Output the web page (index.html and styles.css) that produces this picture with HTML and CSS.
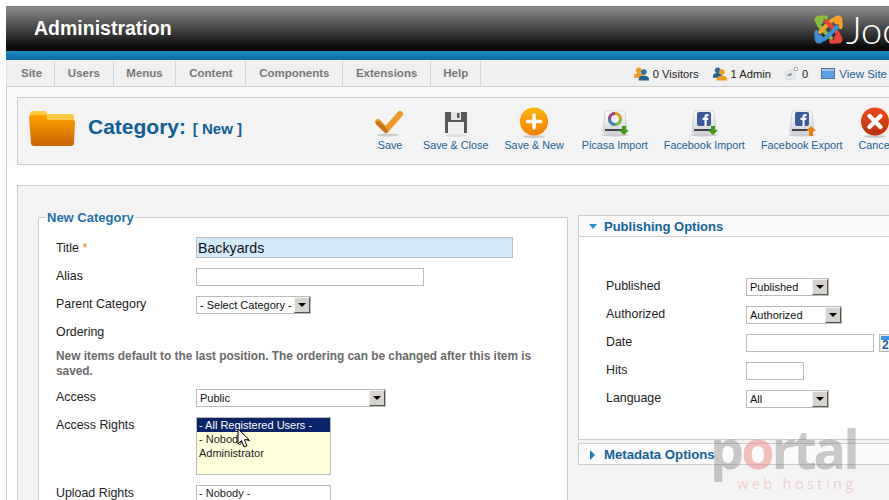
FILE: index.html
```html
<!DOCTYPE html>
<html lang="en">
<head>
<meta charset="utf-8">
<title>Category: New</title>
<link rel="stylesheet" href="styles.css">
</head>
<body>
<div class="page">
  <header class="masthead">
    <h1 class="brand">Administration</h1>
    <div class="logo">
      <svg class="logo-mark" width="31" height="31" viewBox="0 0 31 31" aria-hidden="true">
        <defs>
          <g id="hook" fill="none" stroke-width="4" stroke-linecap="round" stroke-linejoin="round">
            <path d="M13 3.500Q6 2 5 8Q5 11 8 14L18 24"/>
          </g>
        </defs>
        <use href="#hook" stroke="#86bd3c"/>
        <circle cx="6" cy="6" r="4.500" fill="#86bd3c"/>
        <g transform="rotate(90 15.500 15.500)"><use href="#hook" stroke="#f6a125"/><circle cx="6" cy="6" r="4.500" fill="#f6a125"/></g>
        <g transform="rotate(180 15.500 15.500)"><use href="#hook" stroke="#e8423a"/><circle cx="6" cy="6" r="4.500" fill="#e8423a"/></g>
        <g transform="rotate(270 15.500 15.500)"><use href="#hook" stroke="#3a8fd6"/><circle cx="6" cy="6" r="4.500" fill="#3a8fd6"/></g>
      </svg>
      <span class="logo-word">Joomla!</span>
    </div>
  </header>
  <div class="stripe"></div>
  <nav class="menubar">
    <ul class="menu">
      <li>Site</li><li>Users</li><li>Menus</li><li>Content</li><li>Components</li><li>Extensions</li><li>Help</li>
    </ul>
    <div class="status">
      <span class="stat">
        <svg width="15" height="15" viewBox="0 0 16 15" aria-hidden="true"><circle cx="5" cy="4" r="3" fill="#f09a1e"/><path d="M0 11c0-3 2-4 5-4s5 1 5 4v1H0z" fill="#f09a1e"/><circle cx="10.500" cy="6" r="3" fill="#2d6f9e"/><path d="M5 14c0-3 2-4 5.500-4S16 11 16 14v1H5z" fill="#1f628f"/></svg>
        0 Visitors
      </span>
      <span class="stat">
        <svg width="15" height="15" viewBox="0 0 16 15" aria-hidden="true"><circle cx="6" cy="4" r="3" fill="#2d6f9e"/><path d="M1 11c0-3 2-4 5-4s5 1 5 4v1H1z" fill="#1f628f"/><circle cx="10.500" cy="6" r="3" fill="#f09a1e"/><path d="M5 14c0-3 2-4 5.500-4S16 11 16 14v1H5z" fill="#f09a1e"/></svg>
        1 Admin
      </span>
      <span class="stat">
        <svg width="14" height="14" viewBox="0 0 14 14" aria-hidden="true"><path d="M1 5l9-3 1 9-9 2z" fill="#e6e9ec" stroke="#cfd4d8" stroke-width=".8"/><path d="M3.500 7.500l4-1.500v2.500l-4 .5z" fill="#6f8ba3"/><rect x="10.500" y="0.500" width="3" height="3" fill="#fff" stroke="#8fa3b5" stroke-width=".7"/></svg>
        0
      </span>
      <span class="stat stat-link">
        <svg width="14" height="11" viewBox="0 0 14 11" aria-hidden="true"><rect x=".5" y=".5" width="13" height="10" fill="#5aa0e6" stroke="#55708c"/><rect x="1" y="1" width="12" height="2" fill="#9cc6ef"/></svg>
        View Site
      </span>
    </div>
  </nav>

  <main class="content">
    <section class="toolbar-box">
      <svg class="folder" width="46" height="36" viewBox="0 0 46 36" aria-hidden="true">
        <defs><linearGradient id="fo" x1="0" y1="0" x2="0" y2="1"><stop offset="0" stop-color="#ffa200"/><stop offset="1" stop-color="#c96400"/></linearGradient></defs>
        <path d="M1 4q0-3 3-3h11q3 0 3 3h24q3 0 3 3v4H1z" fill="#fbc840"/>
        <path d="M0 7q0-2 2-2h14q2 0 2 3v1q0 1 2 1h24q2 0 2 2l-1 21q0 3-3 3H5q-3 0-3-3z" fill="url(#fo)"/>
      </svg>
      <h2 class="page-title">Category: <small>[ New ]</small></h2>
      <ul class="tools">
        <li class="tool tool-first">
          <svg width="32" height="32" viewBox="0 0 32 32" aria-hidden="true"><ellipse cx="14" cy="28" rx="11" ry="1.500" fill="#ccc"/><path d="M4 15l8 8L26 7" fill="none" stroke="#ef9a24" stroke-width="6" stroke-linecap="round" stroke-linejoin="round"/><path d="M4 16l8 8" fill="none" stroke="#c8741a" stroke-width="4" stroke-linecap="round"/></svg>
          Save
        </li>
        <li class="tool">
          <svg width="32" height="32" viewBox="0 0 32 32" aria-hidden="true"><ellipse cx="16" cy="28.500" rx="11" ry="1.500" fill="#ddd"/><path d="M5 5h22v21H5z" fill="#58585a"/><rect x="11" y="5" width="10" height="8" fill="#e4e4e4"/><rect x="17" y="6" width="2.500" height="5" fill="#58585a"/><rect x="8" y="15" width="16" height="11" fill="#eee"/></svg>
          Save &amp; Close
        </li>
        <li class="tool tool-wide">
          <svg width="32" height="32" viewBox="0 0 32 32" aria-hidden="true"><defs><linearGradient id="pl" x1="0" y1="0" x2="0" y2="1"><stop offset="0" stop-color="#ffb400"/><stop offset="1" stop-color="#f57f00"/></linearGradient></defs><ellipse cx="16" cy="29.500" rx="11" ry="1.500" fill="#ccc"/><circle cx="16" cy="14.500" r="14" fill="url(#pl)"/><path d="M16 8v13M9.500 14.500h13" stroke="#fff" stroke-width="3.600" stroke-linecap="round"/></svg>
          Save &amp; New
        </li>
        <li class="tool">
          <svg width="32" height="32" viewBox="0 0 32 32" aria-hidden="true"><defs><linearGradient id="dr" x1="0" y1="0" x2="0" y2="1"><stop offset="0" stop-color="#fff"/><stop offset="1" stop-color="#cfd2d6"/></linearGradient></defs><ellipse cx="16" cy="28" rx="14" ry="1.500" fill="#ccc"/><path d="M6 6q0-2 2-2h16q2 0 2 2l2 18q0 2-2 2H6q-2 0-2-2z" fill="url(#dr)" stroke="#bfc3c7" stroke-width=".7"/><rect x="6" y="22" width="17" height="2" fill="#3f444a"/><circle cx="16" cy="12" r="5.500" fill="none" stroke="#7fb53c" stroke-width="3"/><path d="M16 6.500a5.500 5.500 0 0 1 5.500 5.500" fill="none" stroke="#e5a11c" stroke-width="3"/><path d="M16 17.500a5.500 5.500 0 0 1-5.500-5.500" fill="none" stroke="#3e7fc4" stroke-width="3"/><path d="M10.500 12a5.500 5.500 0 0 1 5.500-5.500" fill="none" stroke="#a2428f" stroke-width="3"/><path d="M23 19h4v4h3l-5 5-5-5h3z" fill="#3f9b12"/></svg>
          Picasa Import
        </li>
        <li class="tool">
          <svg width="32" height="32" viewBox="0 0 32 32" aria-hidden="true"><ellipse cx="16" cy="28" rx="14" ry="1.500" fill="#ccc"/><path d="M6 6q0-2 2-2h16q2 0 2 2l2 18q0 2-2 2H6q-2 0-2-2z" fill="url(#dr)" stroke="#bfc3c7" stroke-width=".7"/><rect x="6" y="22" width="17" height="2" fill="#3f444a"/><rect x="9" y="5" width="14" height="14" rx="2" fill="#3c5a9a"/><path d="M16.500 19v-6h-2v-2.300h2V9.500q0-2.500 2.500-2.500h1.500v2.200h-1q-.9 0-.9.900v.6h1.900l-.3 2.300h-1.600v6z" fill="#fff"/><path d="M23 19h4v4h3l-5 5-5-5h3z" fill="#3f9b12"/></svg>
          Facebook Import
        </li>
        <li class="tool">
          <svg width="32" height="32" viewBox="0 0 32 32" aria-hidden="true"><ellipse cx="16" cy="28" rx="14" ry="1.500" fill="#ccc"/><path d="M6 6q0-2 2-2h16q2 0 2 2l2 18q0 2-2 2H6q-2 0-2-2z" fill="url(#dr)" stroke="#bfc3c7" stroke-width=".7"/><rect x="6" y="22" width="17" height="2" fill="#3f444a"/><rect x="9" y="5" width="14" height="14" rx="2" fill="#3c5a9a"/><path d="M16.500 19v-6h-2v-2.300h2V9.500q0-2.500 2.500-2.500h1.500v2.200h-1q-.9 0-.9.900v.6h1.900l-.3 2.300h-1.600v6z" fill="#fff"/><path d="M25 19l5 5h-3v5h-4v-5h-3z" fill="#f27a0c"/></svg>
          Facebook Export
        </li>
        <li class="tool">
          <svg width="32" height="32" viewBox="0 0 32 32" aria-hidden="true"><defs><linearGradient id="ca" x1="0" y1="0" x2="0" y2="1"><stop offset="0" stop-color="#ec4a1c"/><stop offset="1" stop-color="#bb3210"/></linearGradient></defs><ellipse cx="16" cy="29.500" rx="11" ry="1.500" fill="#ccc"/><circle cx="16" cy="14.500" r="14" fill="url(#ca)"/><path d="M10.500 9l11 11M21.500 9l-11 11" stroke="#fff" stroke-width="4.400" stroke-linecap="round"/></svg>
          Cancel
        </li>
      </ul>
    </section>

    <form class="form-box">
      <fieldset class="details">
        <legend>New Category</legend>
        <div class="rows">
          <label class="lbl lbl-title">Title <em>*</em></label>
          <input class="field field-title" type="text" value="Backyards">
          <label class="lbl">Alias</label>
          <input class="field field-alias" type="text">
          <label class="lbl">Parent Category</label>
          <div class="pick pick-parent"><span>- Select Category -</span><i class="drop"></i></div>
          <label class="lbl">Ordering</label>
          <div class="spacer"></div>
          <p class="note">New items default to the last position. The ordering can be changed after this item is saved.</p>
          <label class="lbl">Access</label>
          <div class="pick pick-access"><span>Public</span><i class="drop"></i></div>
          <label class="lbl lbl-top">Access Rights</label>
          <ul class="listbox">
            <li class="sel">- All Registered Users -</li>
            <li>- Nobody -</li>
            <li>Administrator</li>
          </ul>
          <label class="lbl lbl-top">Upload Rights</label>
          <ul class="listbox listbox-plain">
            <li>- Nobody -</li>
          </ul>
        </div>
      </fieldset>

      <div class="side">
        <section class="panel">
          <h3 class="panel-head"><i class="arrow-down"></i>Publishing Options</h3>
          <div class="panel-body">
            <label class="lbl">Published</label>
            <div class="pick pick-short"><span>Published</span><i class="drop"></i></div>
            <label class="lbl">Authorized</label>
            <div class="pick pick-auth"><span>Authorized</span><i class="drop"></i></div>
            <label class="lbl">Date</label>
            <div class="date-row">
              <input class="field field-date" type="text">
              <svg class="cal" width="18" height="18" viewBox="0 0 18 18" aria-hidden="true"><rect x=".5" y=".5" width="17" height="17" fill="#e4e4e4" stroke="#bbb"/><rect x="2" y="2" width="14" height="4" fill="#3d97de"/><rect x="2" y="6" width="14" height="10" fill="#fff"/><text x="3" y="15" class="cal-num">2</text></svg>
            </div>
            <label class="lbl">Hits</label>
            <input class="field field-hits" type="text">
            <label class="lbl">Language</label>
            <div class="pick pick-short"><span>All</span><i class="drop"></i></div>
          </div>
        </section>
        <section class="panel panel-closed">
          <h3 class="panel-head"><i class="arrow-right"></i>Metadata Options</h3>
        </section>
      </div>
    </form>
  </main>

  <svg class="cursor" width="14" height="21" viewBox="0 0 14 21" aria-hidden="true"><path d="M1 1v15l3.500-3.500L7 19l3-1.300-2.600-6H12z" fill="#fff" stroke="#000"/></svg>
  <div class="watermark" aria-hidden="true">
    <span class="wm-big">p<b>o</b>rtal</span>
    <span class="wm-small">web hosting</span>
  </div>
</div>
</body>
</html>
```
FILE: styles.css
```css
* { box-sizing: border-box; }
html, body { margin: 0; height: 500px; overflow: hidden; background: #fff; }
body { font-family: "Liberation Sans", Arial, sans-serif; font-size: 12px; color: #222; }
ul { list-style: none; margin: 0; padding: 0; }
.page { position: relative; width: 889px; height: 500px; padding-top: 6px; overflow: hidden; }

.masthead { margin-left: 6px; width: 1000px; height: 45px; display: flex; align-items: center; padding-left: 28px; background: linear-gradient(#8a8a8a, #0a0a0a 92%); border-top: 1px solid #777; }
.brand { margin: 0; width: 137px; flex: none; font-size: 19.5px; font-weight: 700; color: #fff; line-height: 1; white-space: nowrap; }
.logo { display: flex; align-items: center; margin-left: 642px; gap: 2px; }
.logo-word { font-family: Lato, sans-serif; font-weight: 300; font-size: 38px; color: #fff; line-height: 1; }
.stripe { margin-left: 6px; width: 1000px; height: 9px; background: linear-gradient(#1d8ac4, #0a6ba1); }

.menubar { margin-left: 6px; width: 883px; height: 27px; display: flex; justify-content: space-between; background: #f0f0f0; border-top: 1px solid #fff; border-bottom: 1px solid #ccc; border-left: 1px solid #e2e2e2; }
.menu { display: flex; height: 25px; }
.menu li { padding: 0 12.75px; line-height: 25px; font-size: 11.5px; font-weight: 700; color: #777; border-right: 1px solid #d2d2d2; }
.menu li:first-child { padding: 0 12px 0 14px; }
.menu li:last-child { padding: 0 11.500px 0 12.250px; }
.status { display: flex; align-items: center; gap: 13px; white-space: nowrap; font-size: 11.2px; color: #222; height: 25px; margin-right: 2px; }
.stat { display: flex; align-items: center; gap: 4px; }
.stat-link { color: #1a6597; font-size: 11.5px; }

.content { margin-left: 6px; width: 1000px; border-left: 1px solid #ccc; padding: 10px 10px 0; background: linear-gradient(#fafafa 0, #fafafa 80px, #fff 80px); }
.toolbar-box { height: 68px; display: flex; align-items: flex-start; padding: 12px 0 0 11px; background: #f3f3f3; border: 1px solid #ccc; }
.folder { flex: none; }
.page-title { margin: 3px 0 0 13px; width: 286px; flex: none; font-size: 21px; line-height: 28px; font-weight: 700; color: #0f5f96; white-space: nowrap; }
.page-title small { font-size: 15px; margin-left: 1px; }
.tools { display: flex; gap: 16px; margin-top: -3px; }
.tool { display: flex; flex-direction: column; align-items: center; gap: 0; font-size: 10.8px; line-height: 13px; color: #1b6294; white-space: nowrap; }
.tool-first { margin-right: 1px; }
.tool-wide { margin-right: 2px; }

.form-box { display: flex; align-items: flex-start; gap: 10px; margin-top: 20px; height: 400px; padding: 24px 20px 0; background: #f3f3f3; border: 1px solid #ccc; }
.details { width: 530px; height: 380px; flex: none; margin: 0; padding: 0 17px; background: #fff; border: 1px solid #ccc; }
.details legend { margin-left: -10px; padding: 0 1px; font-size: 13px; font-weight: 700; color: #1d6fae; }
.rows { display: grid; grid-template-columns: 140px 1fr; row-gap: 10px; padding-top: 12px; align-items: center; }
.lbl { font-size: 12.4px; color: #222; line-height: 16px; margin-bottom: 2px; }
.lbl-title { margin-bottom: 0; }
.lbl-top { align-self: start; margin-bottom: 0; }
.lbl em { font-style: normal; color: #f08a1c; }
.field { display: block; height: 18px; padding: 0 1px; background: #fff; border: 1px solid #bbb; font-family: inherit; font-size: 12px; color: #111; }
.field-title { width: 317px; height: 21px; background: #d3eafc; font-size: 14.2px; }
.field-alias { width: 228px; }
.field-date { width: 128px; }
.field-hits { width: 58px; }
.spacer { height: 18px; }
.note { grid-column: 1 / -1; margin: -3px 0 0; width: 490px; font-size: 11.85px; line-height: 15px; font-weight: 700; color: #6a6a6a; }

.pick { display: flex; align-items: center; justify-content: space-between; height: 18px; padding-left: 3px; background: #fff; border: 1px solid #bbb; font-size: 11px; color: #111; white-space: nowrap; }
.pick-parent { width: 115px; }
.pick-access { width: 190px; }
.pick-short { width: 83px; }
.pick-auth { width: 96px; }
.drop { position: relative; flex: none; width: 16px; height: 16px; background: #d6d3ce; border: 1px solid; border-color: #f4f3f0 #55534f #55534f #f4f3f0; }
.drop::after { content: ""; position: absolute; left: 3px; top: 5px; border: 4px solid transparent; border-top: 4px solid #000; border-bottom: 0; }

.listbox { height: 58px; width: 135px; background: #ffffdc; border: 1px solid #bbb; font-size: 11px; line-height: 14px; color: #222; }
.listbox li { padding: 0 2px; }
.listbox .sel { background: #0a246a; color: #fff; }
.listbox-plain { background: #fff; }

.side { width: 400px; flex: none; display: flex; flex-direction: column; gap: 3px; margin-top: 5px; }
.panel { background: #fff; border: 1px solid #ccc; height: 225px; }
.panel-closed { height: 22px; background: #fafafa; }
.panel-head { margin: 0; height: 21px; display: flex; align-items: center; padding: 1px 0 0 10px; gap: 7px; font-size: 13px; font-weight: 700; color: #14629a; border-bottom: 1px solid #ccc; background: #fafafa; }
.panel-closed .panel-head { border-bottom: 0; height: 20px; font-size: 13.2px; }
.panel-head i { flex: none; }
.arrow-down { width: 0; height: 0; border: 4.500px solid transparent; border-top: 5px solid #1a93c8; border-bottom: 0; }
.arrow-right { width: 0; height: 0; margin-left: 1px; margin-right: 2px; border: 5px solid transparent; border-left: 5px solid #1a7fb5; border-right: 0; }
.panel-body { display: grid; grid-template-columns: 140px 1fr; row-gap: 10px; padding: 41px 27px 0; align-items: center; justify-items: start; }
.date-row { display: flex; gap: 5px; align-items: center; }
.cal { flex: none; }
.cal-num { font-size: 12px; font-weight: 700; fill: #15619c; font-family: "Liberation Sans", sans-serif; }

.cursor { position: absolute; left: 237px; top: 428px; }
.watermark { position: absolute; left: 710px; top: 425px; width: 150px; display: flex; flex-direction: column; align-items: flex-start; pointer-events: none; }
.wm-big { font-family: "Open Sans", sans-serif; font-size: 54px; font-weight: 700; line-height: 46px; letter-spacing: -3px; color: rgba(110, 110, 110, .36); }
.wm-big b { font-weight: 700; color: rgba(235, 130, 130, .5); }
.wm-small { font-family: "Open Sans", sans-serif; font-size: 14.5px; line-height: 16px; letter-spacing: 3.4px; margin: 5px 0 0 27px; color: rgba(230, 120, 120, .32); white-space: nowrap; }
```
